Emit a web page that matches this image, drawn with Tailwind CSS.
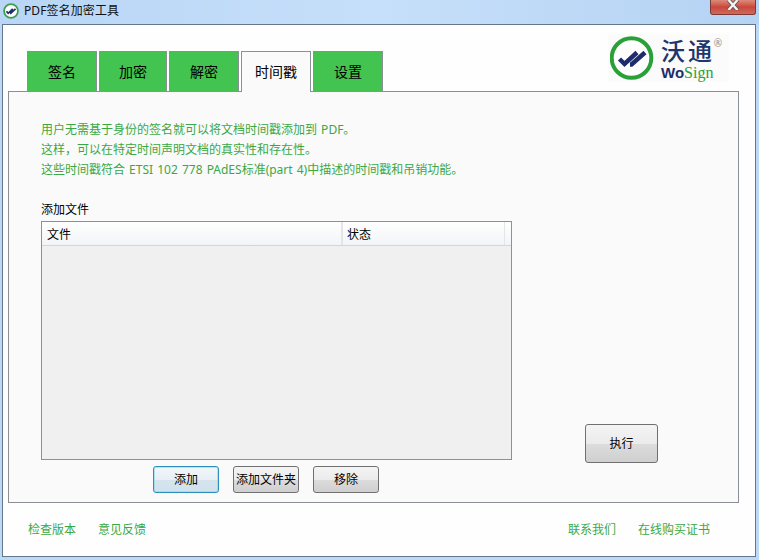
<!DOCTYPE html>
<html lang="zh-CN">
<head>
    <meta charset="UTF-8">
    <title>PDF签名加密工具</title>
    <script src="https://cdn.jsdelivr.net/npm/@tailwindcss/browser@4"></script>
</head>
<body class="w-[759px] h-[560px] overflow-hidden bg-[#bcd9f5] text-black font-['Noto_Sans','Noto_Sans_CJK_SC',sans-serif]">
    <!-- title bar -->
    <div class="h-6 flex items-start justify-between pl-[3px] pr-[3px] bg-gradient-to-r from-[#b9d6f6] via-[#c6dffa] to-[#b5d3f3]">
        <div class="flex items-center gap-[5px] h-5 mt-px">
            <svg class="w-4 h-4" viewBox="0 0 46 46">
                <circle cx="23" cy="23" r="20" fill="#fff" stroke="#3f9e4d" stroke-width="5"/>
                <path d="M10 24l5 5.500L28 17M20 29.500h2L36 17" fill="none" stroke="#1f2f6b" stroke-width="5"/>
            </svg>
            <span class="text-xs leading-5 text-[#111] tracking-[0.1px]">PDF签名加密工具</span>
        </div>
        <div class="w-[46px] h-[15px] rounded-b-[3px] border border-t-0 border-[#7a3a36] bg-gradient-to-b from-[#dd8a7c] via-[#c9473a] to-[#d0695c] flex items-start justify-center">
            <svg class="w-3 h-[10px]" viewBox="0 0 12 10">
                <path d="M1.500 0l9 10M10.500 0l-9 10" stroke="#555" stroke-width="4"/>
                <path d="M1.500 0l9 10M10.500 0l-9 10" stroke="#f4f4f4" stroke-width="2.400"/>
            </svg>
        </div>
    </div>

    <!-- window client area -->
    <div class="ml-[2px] w-[754px] h-[533px] border border-[#65758a] bg-[#fefefe] flex flex-col">
        <!-- tabs row with logo -->
        <div class="h-[66px] flex items-end justify-between pl-6 pr-[26px] relative z-10">
            <div class="flex gap-[2px] -mb-px">
                <div class="w-[70px] h-[41px] pl-px flex items-center justify-center text-sm bg-[#43c350] border-t border-r border-[#8b8f96]">签名</div>
                <div class="w-[68px] h-[41px] pl-px flex items-center justify-center text-sm bg-[#43c350] border-t border-r border-[#8b8f96]">加密</div>
                <div class="w-[70px] h-[41px] pl-px flex items-center justify-center text-sm bg-[#43c350] border-t border-r border-[#8b8f96]">解密</div>
                <div class="w-[70px] h-[41px] flex items-center justify-center text-sm bg-[#fafafa] border border-b-0 border-[#8b8f96]">时间戳</div>
                <div class="w-[70px] h-[41px] pl-px flex items-center justify-center text-sm bg-[#43c350] border-t border-r border-[#8b8f96]">设置</div>
            </div>
            <!-- logo -->
            <div class="w-[121px] h-[48px] mb-[9px] flex items-center gap-[7px] pl-[2px] bg-[#fbfbfb]">
                <svg class="w-[44px] h-[46px] shrink-0" viewBox="0 0 44 46">
                    <circle cx="21.500" cy="23" r="19.800" fill="#fff" stroke="#2aa038" stroke-width="4"/>
                    <path d="M9.500 24l5 5L27 17.500M20 29.500h1.500L35 17.500" fill="none" stroke="#1d2c6c" stroke-width="4.500"/>
                </svg>
                <div class="flex flex-col relative pt-[3px]">
                    <span class="text-[24px] leading-[26px] tracking-[3px] font-medium text-[#20366b]">沃通</span>
                    <span class="leading-[17px] whitespace-nowrap"><span class="text-[15px] font-bold font-['Liberation_Sans',sans-serif] text-[#1d2c6c]">Wo</span><span class="text-[16px] font-['Liberation_Serif',serif] text-[#2aa038]">Sign</span></span>
                    <span class="absolute -right-[7px] top-[3px] text-[10px] leading-none text-[#8a8f99]">®</span>
                </div>
            </div>
        </div>

        <!-- panel -->
        <div class="ml-[5px] w-[731px] h-[412px] border border-[#8b8f96] bg-[#fafafa] pl-8 pt-[28px] flex">
            <div class="w-[471px]">
                <div class="text-xs leading-5 text-[#3aa845] [word-spacing:1px]">
                    <p>用户无需基于身份的签名就可以将文档时间戳添加到 PDF。</p>
                    <p>这样，可以在特定时间声明文档的真实性和存在性。</p>
                    <p>这些时间戳符合 ETSI 102 778 PAdES标准(part 4)中描述的时间戳和吊销功能。</p>
                </div>
                <p class="mt-[20px] mb-[1px] text-xs leading-5">添加文件</p>
                <div class="w-[471px] h-[239px] border border-[#7f93ad] bg-[#f0f0f0]">
                    <div class="h-6 flex text-xs bg-gradient-to-b from-white to-[#f3f4f6] border-b border-[#d5d5d5]">
                        <div class="w-[301px] pl-[5px] leading-[26px] border-r-2 border-[#e4e5e7]">文件</div>
                        <div class="w-[162px] pl-[4px] leading-[26px] border-r border-[#e4e5e7]">状态</div>
                    </div>
                </div>
                <div class="mt-[6px] ml-28 flex gap-[14px]">
                    <button class="w-[66px] h-[27px] text-xs rounded-[3px] border border-[#2c8fbc] bg-[linear-gradient(#f1f7fb,#e8f0f5_50%,#d6e4ec_52%,#cfe3ef)] ring-1 ring-inset ring-[#8fd3ee]/60">添加</button>
                    <button class="w-[66px] h-[27px] text-xs rounded-[3px] border border-[#707070] bg-[linear-gradient(#f4f4f4,#ebebeb_50%,#dcdcdc_52%,#cfcfcf)]">添加文件夹</button>
                    <button class="w-[66px] h-[27px] text-xs rounded-[3px] border border-[#707070] bg-[linear-gradient(#f4f4f4,#ebebeb_50%,#dcdcdc_52%,#cfcfcf)]">移除</button>
                </div>
            </div>
            <div class="ml-[73px] mt-[304px]">
                <button class="w-[73px] h-[39px] text-xs rounded-[3px] border border-[#707070] bg-[linear-gradient(#f4f4f4,#ebebeb_50%,#dcdcdc_52%,#cfcfcf)]">执行</button>
            </div>
        </div>

        <!-- footer links -->
        <div class="flex justify-between pl-[25px] pr-[45px] mt-[17px] text-xs leading-5 text-[#3aa845]">
            <div class="flex gap-[22px]"><span>检查版本</span><span>意见反馈</span></div>
            <div class="flex gap-[22px]"><span>联系我们</span><span>在线购买证书</span></div>
        </div>
    </div>
</body>
</html>
